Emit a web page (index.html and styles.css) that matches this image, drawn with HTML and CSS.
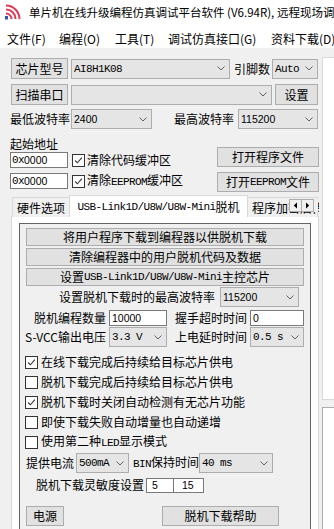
FILE: index.html
```html
<!DOCTYPE html>
<html lang="zh">
<head>
<meta charset="utf-8">
<title>STC-ISP</title>
<link rel="stylesheet" href="styles.css">
</head>
<body>
<div class="titlebar">
  <svg class="logo" viewBox="0 0 18 16" width="18" height="16">
    <path d="M2 1.5 A13.5 13.5 0 0 1 15.5 15" class="arc"/>
    <path d="M2 5.5 A9.5 9.5 0 0 1 11.5 15" class="arc"/>
    <path d="M2 9.5 A5.5 5.5 0 0 1 7.5 15" class="arc"/>
    <path d="M1 12 L4 12 L4 15.5 L1 15.5 Z" fill="#2a56c6"/>
  </svg>
  <span class="title">单片机在线升级编程仿真调试平台软件 (V6.94R), 远程现场调试</span>
</div>
<div class="menubar">
  <span class="mi m1">文件(F)</span>
  <span class="mi m2">编程(O)</span>
  <span class="mi m3">工具(T)</span>
  <span class="mi m4">调试仿真接口(G)</span>
  <span class="mi">资料下载(D)</span>
</div>
<div class="client">
  <div class="main">
    <div class="row r1">
      <div class="btn w-chip">芯片型号</div>
      <div class="combo w-mcu"><span class="sim">AI8H1K08</span><svg class="chev" viewBox="0 0 8 5"><path d="M0.5 0.5 L4 4 L7.5 0.5"/></svg></div>
      <span class="lbl lbl-pins">引脚数</span>
      <div class="combo w-auto"><span class="sim">Auto</span><svg class="chev" viewBox="0 0 8 5"><path d="M0.5 0.5 L4 4 L7.5 0.5"/></svg></div>
    </div>
    <div class="row r2">
      <div class="btn w-chip">扫描串口</div>
      <div class="combo w-port"><span></span><svg class="chev" viewBox="0 0 8 5"><path d="M0.5 0.5 L4 4 L7.5 0.5"/></svg></div>
      <div class="btn w-set">设置</div>
    </div>
    <div class="row r3">
      <span class="lbl lbl-min">最低波特率</span>
      <div class="combo w-min"><span class="num">2400</span><svg class="chev" viewBox="0 0 8 5"><path d="M0.5 0.5 L4 4 L7.5 0.5"/></svg></div>
      <span class="lbl lbl-max">最高波特率</span>
      <div class="combo w-max"><span class="num">115200</span><svg class="chev" viewBox="0 0 8 5"><path d="M0.5 0.5 L4 4 L7.5 0.5"/></svg></div>
    </div>
    <div class="addr">
      <div class="addr-left">
        <div class="addr-title">起始地址</div>
        <div class="addr-row first">
          <div class="edit w-addr"><span class="sim">0x</span><span class="num">0000</span></div>
          <span class="cb checked"><svg viewBox="0 0 13 13"><path d="M2.5 6.5 L5.2 9.2 L10.5 3.2"/></svg></span>
          <span class="cb-text">清除代码缓冲区</span>
        </div>
        <div class="addr-row">
          <div class="edit w-addr"><span class="sim">0x</span><span class="num">0000</span></div>
          <span class="cb checked"><svg viewBox="0 0 13 13"><path d="M2.5 6.5 L5.2 9.2 L10.5 3.2"/></svg></span>
          <span class="cb-text">清除<span class="sim">EEPROM</span>缓冲区</span>
        </div>
      </div>
      <div class="addr-right">
        <div class="btn w-open first">打开程序文件</div>
        <div class="btn w-open">打开<span class="sim">EEPROM</span>文件</div>
      </div>
    </div>
    <div class="tabstrip">
      <div class="tab t1">硬件选项</div>
      <div class="tab t2 sel"><span class="sim">USB-Link1D/U8W/U8W-Mini</span>脱机</div>
      <div class="tab t3">程序加密后传输</div>
      <div class="tabarrows">
        <span class="ta"><svg viewBox="0 0 5 7"><path d="M4 0.5 L0.8 3.5 L4 6.5 Z"/></svg></span>
        <span class="ta"><svg viewBox="0 0 5 7"><path d="M1 0.5 L4.2 3.5 L1 6.5 Z"/></svg></span>
      </div>
    </div>
    <div class="tabpanel">
      <div class="frame">
        <div class="btn wide">将用户程序下载到编程器以供脱机下载</div>
        <div class="btn wide">清除编程器中的用户脱机代码及数据</div>
        <div class="btn wide">设置<span class="sim">USB-Link1D/U8W/U8W-Mini</span>主控芯片</div>
        <div class="frow baud">
          <span class="lbl lbl-baud">设置脱机下载时的最高波特率</span>
          <div class="combo w-obaud"><span class="num">115200</span><svg class="chev" viewBox="0 0 8 5"><path d="M0.5 0.5 L4 4 L7.5 0.5"/></svg></div>
        </div>
        <div class="frow cnt">
          <span class="lbl l1">脱机编程数量</span>
          <div class="edit c1"><span class="num">10000</span></div>
          <span class="lbl l2">握手超时时间</span>
          <div class="edit c2"><span class="num">0</span></div>
        </div>
        <div class="frow vcc">
          <span class="lbl l1">S-VCC输出电压</span>
          <div class="combo c1"><span class="sim">3.3 V</span><svg class="chev" viewBox="0 0 8 5"><path d="M0.5 0.5 L4 4 L7.5 0.5"/></svg></div>
          <span class="lbl l2">上电延时时间</span>
          <div class="combo c2"><span class="sim">0.5 s</span><svg class="chev" viewBox="0 0 8 5"><path d="M0.5 0.5 L4 4 L7.5 0.5"/></svg></div>
        </div>
        <div class="checks">
          <div class="crow"><span class="cb checked"><svg viewBox="0 0 13 13"><path d="M2.5 6.5 L5.2 9.2 L10.5 3.2"/></svg></span><span class="cb-text">在线下载完成后持续给目标芯片供电</span></div>
          <div class="crow"><span class="cb"></span><span class="cb-text">脱机下载完成后持续给目标芯片供电</span></div>
          <div class="crow"><span class="cb checked"><svg viewBox="0 0 13 13"><path d="M2.5 6.5 L5.2 9.2 L10.5 3.2"/></svg></span><span class="cb-text">脱机下载时关闭自动检测有无芯片功能</span></div>
          <div class="crow"><span class="cb"></span><span class="cb-text">即使下载失败自动增量也自动递增</span></div>
          <div class="crow"><span class="cb"></span><span class="cb-text">使用第二种<span class="sim">LED</span>显示模式</span></div>
        </div>
        <div class="frow cur">
          <span class="lbl l-cur">提供电流</span>
          <div class="combo w-cur"><span class="sim">500mA</span><svg class="chev" viewBox="0 0 8 5"><path d="M0.5 0.5 L4 4 L7.5 0.5"/></svg></div>
          <span class="lbl l-bin"><span class="sim">BIN</span>保持时间</span>
          <div class="combo w-bin"><span class="sim">40 ms</span><svg class="chev" viewBox="0 0 8 5"><path d="M0.5 0.5 L4 4 L7.5 0.5"/></svg></div>
        </div>
        <div class="frow sens">
          <span class="lbl l-sens">脱机下载灵敏度设置</span>
          <div class="edit e5"><span class="num">5</span></div>
          <div class="edit e15"><span class="num">15</span></div>
        </div>
        <div class="frow bottom">
          <div class="btn b-power">电源</div>
          <div class="btn b-help">脱机下载帮助</div>
        </div>
      </div>
    </div>
  </div>
  <div class="side">
    <div class="side-a"></div>
    <div class="side-b"></div>
  </div>
</div>
</body>
</html>
```
FILE: styles.css
```css
* { box-sizing: border-box; }
html, body { margin: 0; padding: 0; }
body {
  width: 334px;
  height: 529px;
  overflow: hidden;
  background: #f0f0f0;
  font-family: "Noto Sans CJK SC", "Noto Sans", sans-serif;
  font-size: 12px;
  color: #000;
}
.sim {
  font-family: "Liberation Mono", "DejaVu Sans Mono", monospace;
  font-size: 11px;
  letter-spacing: -0.6px;
}
.num {
  font-family: "Liberation Sans", Arial, sans-serif;
  font-size: 10.5px;
}

/* title + menu */
.titlebar {
  height: 24px;
  background: #fff;
  display: flex;
  align-items: center;
  padding-left: 4px;
  white-space: nowrap;
  overflow: hidden;
}
.logo { flex: none; }
.logo .arc { fill: none; stroke: #e23b57; stroke-width: 2; }
.title { margin-left: 7px; font-size: 11.5px; line-height: 16px; }
.menubar {
  height: 24px;
  background: #fff;
  display: flex;
  padding: 7px 0 0 7px;
  line-height: 16px;
  white-space: nowrap;
  overflow: hidden;
}
.mi { flex: none; }
.m1 { width: 52px; }
.m2 { width: 56px; }
.m3 { width: 53px; }
.m4 { width: 103px; }

/* client */
.client { display: flex; padding: 10px 0 0 11px; }
.main { width: 308px; flex: none; }
.side { margin-left: 3px; margin-top: -1px; width: 20px; flex: none; }
.side-a { height: 343px; background: #fff; border: 1px solid #d9d9d9; }
.side-b { height: 130px; margin-top: 7px; background: #fff; border: 1px solid #adadad; }

.row { display: flex; align-items: center; }
.r1 { height: 21px; }
.r2 { height: 21px; margin-top: 5px; }
.r3 { height: 20px; margin-top: 4px; }

.btn {
  flex: none;
  background: #e1e1e1;
  border: 1px solid #adadad;
  display: flex;
  align-items: center;
  justify-content: center;
  line-height: 14px;
  white-space: nowrap;
}
.combo {
  flex: none;
  height: 20px;
  background: #e5e5e5;
  border: 1px solid #adadad;
  display: flex;
  align-items: center;
  justify-content: space-between;
  padding: 0 4px 0 2px;
  white-space: nowrap;
  line-height: 14px;
}
.chev { width: 8px; height: 5px; flex: none; }
.chev path { fill: none; stroke: #606060; stroke-width: 1; }
.edit {
  flex: none;
  background: #fff;
  border: 1px solid #7a7a7a;
  display: flex;
  align-items: center;
  padding: 0 2px;
  white-space: nowrap;
  line-height: 14px;
}
.lbl { flex: none; white-space: nowrap; line-height: 16px; }

.w-chip { width: 57px; height: 21px; }
.w-mcu { width: 159px; margin-left: 3px; }
.lbl-pins { width: 36px; margin-left: 4px; }
.w-auto { width: 46px; margin-left: 2px; }
.w-port { width: 201px; margin-left: 3px; }
.w-set { width: 43px; height: 21px; margin-left: 3px; }
.lbl-min { width: 60px; margin-left: -1px; }
.w-min { width: 81px; margin-left: 1px; }
.lbl-max { width: 60px; margin-left: 22px; }
.w-max { width: 80px; margin-left: 4px; }

/* address section */
.addr { display: flex; margin-top: 6px; }
.addr-left { flex: 1; }
.addr-title { line-height: 17px; height: 17px; margin-left: -1px; }
.addr-row { display: flex; align-items: center; height: 16px; margin-top: 5px; white-space: nowrap; }
.addr-row.first { margin-top: 0; }
.w-addr { width: 58px; height: 16px; margin-left: -1px; padding-left: 1px; }
.cb {
  flex: none;
  width: 13px;
  height: 13px;
  background: #fff;
  border: 1px solid #333;
  display: inline-flex;
}
.cb svg { width: 11px; height: 11px; }
.cb svg path { fill: none; stroke: #333; stroke-width: 1.3; }
.addr-row .cb { margin-left: 4px; }
.cb-text { margin-left: 2px; line-height: 16px; white-space: nowrap; }
.addr-right { width: 102px; flex: none; }
.w-open { width: 102px; height: 20px; margin-top: 5px; }
.w-open.first { margin-top: 12px; }

/* tabs */
.tabstrip {
  position: relative;
  display: flex;
  height: 22px;
  margin-top: 3px;
  overflow: hidden;
  z-index: 1;
}
.tab {
  flex: none;
  height: 20px;
  margin-top: 2px;
  background: #f0f0f0;
  border: 1px solid #d9d9d9;
  border-bottom: none;
  display: flex;
  align-items: center;
  justify-content: center;
  white-space: nowrap;
  line-height: 16px;
}
.t1 { width: 58px; margin-left: 1px; }
.t2 { width: 179px; margin-left: -1px; }
.t3 { width: 70px; justify-content: flex-start; padding-left: 4px; border-left: none; }
.tab.sel { height: 22px; margin-top: 0; background: #fff; }
.tabarrows {
  position: absolute;
  left: 278px;
  top: 4px;
  display: flex;
  background: #f0f0f0;
  padding-right: 4px;
}
.ta {
  width: 13px;
  height: 13px;
  border: 1px solid #adadad;
  background: #f0f0f0;
  display: flex;
  align-items: center;
  justify-content: center;
}
.ta + .ta { margin-left: -1px; }
.ta svg { width: 5px; height: 7px; }
.ta svg path { fill: #000; }

.tabpanel {
  margin-top: -1px;
  height: 320px;
  background: #fff;
  border: 1px solid #d9d9d9;
  padding: 6px 7px 0 7px;
}
.frame {
  height: 320px;
  border: 1px solid #646464;
  background: #f0f0f0;
  padding: 4px 0 0 0;
}
.wide { width: 278px; height: 18px; margin-left: 6px; margin-bottom: 2px; }
.frow { display: flex; align-items: center; }
.baud { height: 20px; margin-top: -1px; }
.lbl-baud { width: 200px; text-align: right; padding-right: 5px; }
.w-obaud { width: 79px; }
.cnt { height: 16px; margin-top: 3px; }
.vcc { height: 20px; margin-top: 1px; }
.l1 { width: 86px; text-align: right; }
.c1 { width: 58px; margin-left: 3px; }
.edit.c1, .edit.c2 { height: 16px; }
.l2 { width: 80px; text-align: right; }
.c2 { width: 54px; margin-left: 3px; }
.checks { margin-top: 5px; }
.crow { display: flex; align-items: center; height: 20px; padding-left: 5px; }
.crow .cb-text { margin-left: 3px; }
.cur { height: 20px; margin-top: 1px; }
.l-cur { width: 50px; margin-left: 6px; }
.w-cur { width: 53px; }
.l-bin { width: 66px; margin-left: 4px; }
.w-bin { width: 74px; }
.sens { height: 16px; margin-top: 4px; }
.l-sens { width: 110px; margin-left: 16px; }
.e5 { width: 28px; height: 15px; padding-left: 5px; }
.e15 { width: 31px; height: 15px; margin-left: -1px; padding-left: 8px; }
.bottom { margin-top: 13px; }
.b-power { width: 38px; height: 20px; margin-left: 6px; }
.b-help { width: 117px; height: 20px; margin-left: 98px; }
```
